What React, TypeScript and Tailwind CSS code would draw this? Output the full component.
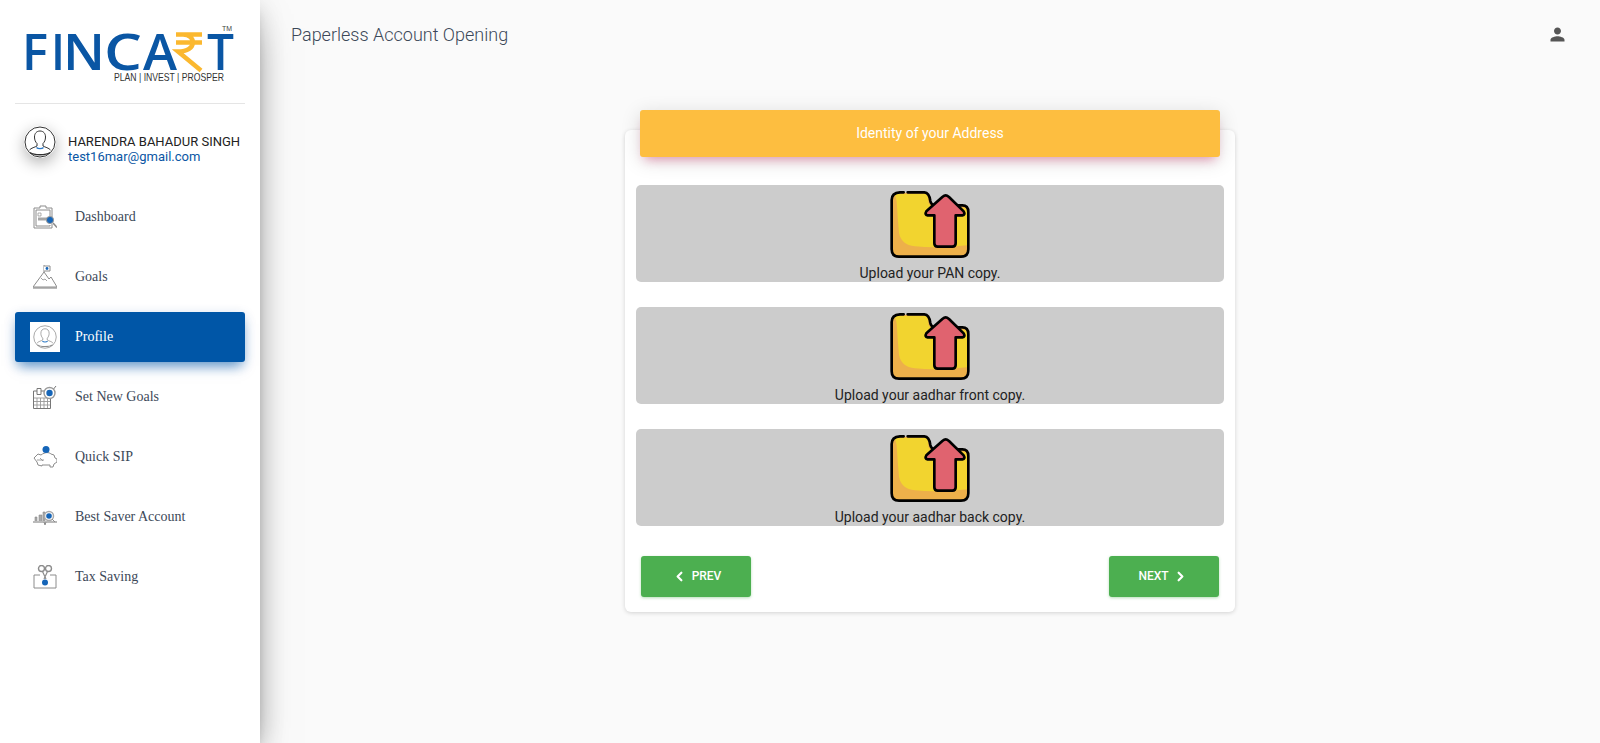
import { ChevronLeft, ChevronRight } from "lucide-react"
import type { ReactNode } from "react"

const g = "#8c8c8c"
const b = "#1565b8"

function IconBox({ children }: { children: ReactNode }) {
  return (
    <svg width="24" height="24" viewBox="0 0 24 24" fill="none" stroke={g} strokeWidth="1">
      {children}
    </svg>
  )
}

function DashboardIcon() {
  return (
    <IconBox>
      <path d="M1 3h6V1h6v2h6v9M19 19v4H1V3" />
      <path d="M3 5h14v6M3 5v16h14v-1" />
      <path d="M5 14h10" strokeWidth="3" stroke="#a5a5a5" />
      <path d="M5 8h3v3H5z" strokeWidth=".7" />
      <circle cx="17" cy="15" r="3.6" fill={b} stroke="#9a9a9a" />
      <path d="M20 18l4 4.5" strokeWidth="1.5" />
    </IconBox>
  )
}

function GoalsIcon() {
  return (
    <IconBox>
      <path d="M0 22L11 7l5 7 2-2 6 10z" />
      <path d="M0 23h24" strokeWidth="1.2" />
      <path d="M11 7V0" />
      <path d="M11 1h6v5h-6" fill="#fff" />
      <circle cx="14" cy="3.5" r="1.4" fill={b} stroke="none" />
      <path d="M8 13l2 2 2-1 2 2" strokeWidth=".8" />
    </IconBox>
  )
}

function SetGoalsIcon() {
  return (
    <IconBox>
      <path d="M.5 23.500V6h17v17.500z" fill="#fff" stroke="#777" />
      <path d="M1 13h16M1 16.500h16M1 20h16M4 13v10M7.500 13v10M11 13v10M14.500 13v10" stroke="#999" strokeWidth=".9" />
      <path d="M4 3.500h4v6H4z" fill="#fff" stroke="#777" />
      <path d="M19 6l4-5" stroke="#777" />
      <circle cx="16.500" cy="8" r="5.500" fill="#fff" stroke="#9a9a9a" strokeWidth="1.400" />
      <circle cx="16.500" cy="8" r="3.200" fill={b} stroke="none" />
    </IconBox>
  )
}

function PiggyIcon() {
  return (
    <IconBox>
      <path d="M1 13l4-4 3 1c4-3 8-3 10-1l3 1 1 3 2 1v3l-3 2-1 3h-3v-2H9v1l-4-1-1-3z" />
      <path d="M4 15h7M7 13l3 3" strokeWidth=".8" />
      <circle cx="13" cy="4.500" r="3.500" fill={b} stroke="none" />
    </IconBox>
  )
}

function SaverIcon() {
  return (
    <IconBox>
      <path d="M0 17h24" strokeWidth="1.2" />
      <path d="M2 16v-4h2v4M6 16v-6h3v6M10 16V7h2v9" fill="#aaa" strokeWidth=".6" />
      <circle cx="16" cy="11" r="4.500" fill="#fff" stroke="#aaa" strokeWidth="1.500" />
      <circle cx="16" cy="11" r="2.800" fill={b} stroke="none" />
      <path d="M19 14l3 3M11 17l1 3 1-3" />
    </IconBox>
  )
}

function TaxIcon() {
  return (
    <IconBox>
      <path d="M7 10H1v13h22V10h-6" />
      <circle cx="8.500" cy="3.500" r="3" strokeWidth="1.400" />
      <circle cx="15.500" cy="3.500" r="3" strokeWidth="1.400" />
      <path d="M9.500 6.500L13 14M14.500 6.500L11 14" strokeWidth="1.200" />
      <circle cx="12" cy="17.500" r="3" fill={b} stroke="none" />
    </IconBox>
  )
}

function PersonOutline({ size, color }: { size: number; color: string }) {
  return (
    <svg width={size} height={size} viewBox="0 0 32 32" fill="none" stroke={color} strokeWidth="1">
      <circle cx="16" cy="16" r="15" />
      <path d="M16 5c-3.500 0-5.500 2.500-5.500 6 0 3 1 5 2.500 6.500v2.500c-2 1.200-6 2-7.500 4M16 5c3.500 0 5.500 2.500 5.500 6 0 3-1 5-2.500 6.500v2.500c2 1.200 6 2 7.500 4" />
      <path d="M12.500 21.500c1.500 1.500 5.500 1.500 7 0" stroke="#2b78c5" strokeWidth="1.400" />
      <path d="M6 26.500c4 3 16 3 20 0" strokeWidth="1.400" />
    </svg>
  )
}

const navItems = [
  { label: "Dashboard", icon: <DashboardIcon /> },
  { label: "Goals", icon: <GoalsIcon /> },
  { label: "Profile", icon: <PersonOutline size={24} color="#8c8c8c" />, active: true },
  { label: "Set New Goals", icon: <SetGoalsIcon /> },
  { label: "Quick SIP", icon: <PiggyIcon /> },
  { label: "Best Saver Account", icon: <SaverIcon /> },
  { label: "Tax Saving", icon: <TaxIcon /> },
]

const uploads = ["Upload your PAN copy.", "Upload your aadhar front copy.", "Upload your aadhar back copy."]

function Logo() {
  const blue = "#0a56a4"
  const letter = { fill: blue, fontFamily: "'Open Sans', sans-serif", fontWeight: 600, fontSize: 51 }
  return (
    <svg width="210" height="60" viewBox="25 25 210 60" className="block">
      <text x="22" y="70" textLength="26" lengthAdjust="spacingAndGlyphs" {...letter}>F</text>
      <text x="51" y="70" textLength="14" lengthAdjust="spacingAndGlyphs" {...letter}>I</text>
      <text x="63" y="70" textLength="42" lengthAdjust="spacingAndGlyphs" {...letter}>N</text>
      <text x="104" y="70" textLength="38" lengthAdjust="spacingAndGlyphs" {...letter}>C</text>
      <text x="143" y="70" textLength="34" lengthAdjust="spacingAndGlyphs" {...letter}>A</text>
      <path
        d="M176 34.500h26M176 42.500h26M183 34.500c13 0 15 17-5 17l23 19"
        fill="none"
        stroke="#fbb82f"
        strokeWidth="4.500"
      />
      <text x="207" y="70" textLength="27" lengthAdjust="spacingAndGlyphs" {...letter}>T</text>
      <text x="114" y="81" textLength="110" lengthAdjust="spacingAndGlyphs" fontSize="11" fill="#333" fontFamily="'Liberation Sans', sans-serif">
        PLAN | INVEST | PROSPER
      </text>
      <text x="222" y="31" textLength="10" lengthAdjust="spacingAndGlyphs" fontSize="7" fill="#444" fontFamily="'Liberation Sans', sans-serif">
        TM
      </text>
    </svg>
  )
}

function FolderUpload() {
  return (
    <svg width="90" height="76" viewBox="0 0 270 228" className="block">
      <path
        d="M45 20H120Q132 20 135 45Q137 57 150 58H232Q250 58 250 78V190Q250 212 228 212H42Q20 212 20 190V42Q20 20 45 20Z"
        fill="#edb04a"
      />
      <path
        d="M28 24H125Q130 30 130 50L140 65H230Q246 65 246 78V178Q160 188 90 181Q48 176 42 140Q38 100 36 60Q35 35 28 24Z"
        fill="#f2d42f"
      />
      <path
        d="M68 19H118Q133 20 136 45Q138 57 150 58H232Q250 58 250 78V190Q250 212 228 212H42Q20 212 20 190V42Q20 20 45 19H56"
        fill="none"
        stroke="#000"
        strokeWidth="8"
        strokeLinecap="round"
      />
      <path
        d="M182 28Q186 28 192 33L236 76Q242 86 232 88H212V172Q212 182 202 182H158Q148 182 148 172V88H128Q118 86 124 76L172 33Q178 28 182 28Z"
        fill="#e0636f"
        stroke="#000"
        strokeWidth="8"
        strokeLinejoin="round"
      />
    </svg>
  )
}

export default function App() {
  return (
    <div className="flex h-screen overflow-hidden bg-[#fafafa] font-['Roboto',sans-serif]">
      <aside className="relative z-10 h-full w-[260px] shrink-0 bg-white px-[15px] shadow-[0_16px_38px_-12px_rgba(0,0,0,0.56),0_4px_25px_0_rgba(0,0,0,0.12),0_8px_10px_-5px_rgba(0,0,0,0.2)]">
        <div className="flex h-[104px] items-start border-b border-[#e5e5e5] pl-[10px] pt-[25px]">
          <Logo />
        </div>
        <div className="flex h-[88px] items-start pl-[9px] pt-[22px]">
          <div className="h-[32px] w-[32px] rounded-full bg-white shadow-[0_5px_15px_rgba(0,0,0,0.3)]">
            <PersonOutline size={32} color="#333" />
          </div>
          <div className="ml-[12px] pt-[8px] text-[13px] leading-[15px] whitespace-nowrap">
            <div className="text-[#222]">HARENDRA BAHADUR SINGH</div>
            <div className="text-[#0a56a4]">test16mar@gmail.com</div>
          </div>
        </div>
        <nav className="flex flex-col gap-[10px]">
          {navItems.map((item) => (
            <a
              key={item.label}
              className={`flex h-[50px] items-center rounded-[3px] pl-[15px] font-['Liberation_Serif',serif] text-[14px] ${
                item.active
                  ? "bg-[#0056a7] text-white shadow-[0_8px_12px_-4px_rgba(0,86,167,0.55),0_3px_12px_rgba(0,86,167,0.2)]"
                  : "text-[#3c4858]"
              }`}
            >
              <span className={`flex h-[30px] w-[30px] items-center justify-center ${item.active ? "bg-white" : ""}`}>
                {item.icon}
              </span>
              <span className="ml-[15px] pb-[2px]">{item.label}</span>
            </a>
          ))}
        </nav>
      </aside>

      <main className="flex min-w-0 flex-1 flex-col">
        <header className="flex h-[69px] shrink-0 items-center justify-between pl-[31px] pr-[32px]">
          <h1 className="text-[18px] font-light text-[#3c4858]">Paperless Account Opening</h1>
          <svg width="21" height="21" viewBox="0 0 24 24" fill="#555">
            <path d="M12 12c2.210 0 4-1.790 4-4s-1.790-4-4-4-4 1.790-4 4 1.790 4 4 4zm0 2c-2.670 0-8 1.340-8 4v2h16v-2c0-2.660-5.330-4-8-4z" />
          </svg>
        </header>

        <section className="mx-auto mt-[61px] w-[610px] rounded-[6px] bg-white shadow-[0_1px_4px_rgba(0,0,0,0.16)]">
          <div className="mx-[15px] -mt-[20px] flex h-[47px] items-center justify-center rounded-[3px] bg-[#fdbe40] text-[14px] text-white shadow-[0_4px_20px_rgba(0,0,0,0.14),0_7px_10px_-5px_rgba(233,30,99,0.4)]">
            Identity of your Address
          </div>
          <div className="mt-[28px] flex flex-col gap-[25px] px-[11px]">
            {uploads.map((text) => (
              <div key={text} className="flex h-[97px] flex-col items-center overflow-hidden rounded-[5px] bg-[#cccccc] pt-[1px] text-[14px] leading-[16px] text-[#222]">
                <FolderUpload />
                <span className="mt-[3px]">{text}</span>
              </div>
            ))}
          </div>
          <div className="flex justify-between px-[16px] pb-[15px] pt-[30px]">
            <button className="flex h-[41px] w-[110px] items-center justify-center rounded-[3px] bg-[#4caf50] pb-[2px] text-[12px] font-medium text-white shadow-[0_1px_3px_rgba(76,175,80,0.4)]">
              <ChevronLeft size={15} strokeWidth={3.5} className="ml-[1px] mr-[5px] mt-[2px]" />
              PREV
            </button>
            <button className="flex h-[41px] w-[110px] items-center justify-center rounded-[3px] bg-[#4caf50] pb-[2px] text-[12px] font-medium text-white shadow-[0_1px_3px_rgba(76,175,80,0.4)]">
              NEXT
              <ChevronRight size={15} strokeWidth={3.5} className="ml-[4px] mr-[2px] mt-[2px]" />
            </button>
          </div>
        </section>
      </main>
    </div>
  )
}
